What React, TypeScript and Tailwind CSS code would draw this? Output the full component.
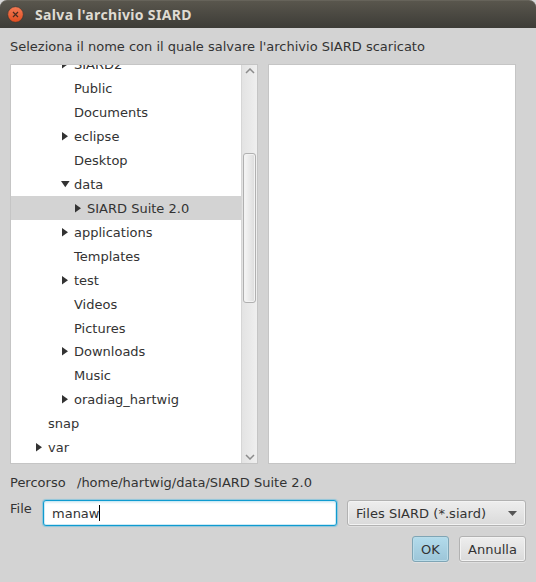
import React from "react";

type Row = {
  label: string;
  indent: string;
  state?: "open" | "closed";
  selected?: boolean;
  height?: string;
};

const rows: Row[] = [
  { label: "SIARD2", indent: "pl-[50px]", state: "closed" },
  { label: "Public", indent: "pl-[50px]" },
  { label: "Documents", indent: "pl-[50px]" },
  { label: "eclipse", indent: "pl-[50px]", state: "closed" },
  { label: "Desktop", indent: "pl-[50px]" },
  { label: "data", indent: "pl-[50px]", state: "open" },
  { label: "SIARD Suite 2.0", indent: "pl-[63px]", state: "closed", selected: true },
  { label: "applications", indent: "pl-[50px]", state: "closed" },
  { label: "Templates", indent: "pl-[50px]" },
  { label: "test", indent: "pl-[50px]", state: "closed" },
  { label: "Videos", indent: "pl-[50px]" },
  { label: "Pictures", indent: "pl-[50px]", height: "h-[23px]" },
  { label: "Downloads", indent: "pl-[50px]", state: "closed" },
  { label: "Music", indent: "pl-[50px]" },
  { label: "oradiag_hartwig", indent: "pl-[50px]", state: "closed" },
  { label: "snap", indent: "pl-[24px]" },
  { label: "var", indent: "pl-[24px]", state: "closed" },
];

function Disclosure({ state }: { state?: "open" | "closed" }) {
  return (
    <svg width="13" height="10" viewBox="0 0 13 10" className="mt-[7px] shrink-0" fill="#333333">
      {state === "closed" && <path d="M1 1L7 5.2L1 9.4Z" />}
      {state === "open" && <path d="M0 2H8.6L4.3 8.2Z" />}
    </svg>
  );
}

function TreeRow({ row }: { row: Row }) {
  return (
    <div
      className={`flex shrink-0 items-start ${row.height ?? "h-6"} ${row.indent} ${row.selected ? "bg-[#d3d3d3]" : ""}`}
    >
      <Disclosure state={row.state} />
      <span className="pt-px leading-6">{row.label}</span>
    </div>
  );
}

function ScrollBar() {
  return (
    <div className="flex w-4 shrink-0 flex-col items-center border-l border-[#d6d6d6] bg-linear-to-r from-[#e3e3e3] to-[#efefef]">
      <svg width="10" height="6" viewBox="0 0 10 6" className="mt-[3px] shrink-0" fill="none" stroke="#8c8c8c" strokeWidth="1.5">
        <path d="M1 5L5 1L9 5" />
      </svg>
      <div className="mt-[79px] h-[150px] w-[13px] shrink-0 rounded-[3px] border border-[#b0b0b0] bg-linear-to-r from-[#f6f6f6] to-[#dcdcdc] shadow-[inset_0_0_0_1px_#f2f2f2]" />
      <svg width="10" height="6" viewBox="0 0 10 6" className="mt-auto mb-[3px] shrink-0" fill="none" stroke="#8c8c8c" strokeWidth="1.5">
        <path d="M1 1L5 5L9 1" />
      </svg>
    </div>
  );
}

export default function App() {
  return (
    <div className="flex h-[582px] w-[536px] flex-col overflow-hidden bg-[#d3d3d3] font-['DejaVu_Sans',sans-serif] text-[13px] text-[#333333]">
      <div className="h-7 shrink-0 bg-[#d8d8d8]">
        <header className="flex h-7 items-center rounded-t-[7px] border-t border-[#66635a] bg-linear-to-b from-[#59564d] to-[#3d3c37] pl-[7px]">
          <svg width="17" height="17" viewBox="0 0 17 17" className="shrink-0">
            <defs>
              <linearGradient id="close" x1="0" y1="0" x2="0" y2="1">
                <stop offset="0" stopColor="#f47b55" />
                <stop offset="1" stopColor="#df4d20" />
              </linearGradient>
            </defs>
            <circle cx="8.5" cy="8.5" r="7.8" fill="url(#close)" stroke="#35332e" strokeWidth=".6" />
            <path d="M6 6L11 11M11 6L6 11" stroke="#4a2c20" strokeWidth="1.2" />
          </svg>
          <h1 className="ml-[11px] font-['Noto_Sans',sans-serif] text-[14px] font-bold leading-5 tracking-[0.34px] text-[#dfdbd2]">
            Salva l'archivio SIARD
          </h1>
        </header>
      </div>
      <main className="flex flex-1 flex-col px-[10px] pt-[9px]">
        <p className="h-[27px] leading-5">Seleziona il nome con il quale salvare l'archivio SIARD scaricato</p>
        <div className="flex h-[400px] gap-[10px]">
          <div className="flex w-[248px] overflow-hidden border border-[#c5c5c5] bg-white">
            <div className="-mt-[13px] flex flex-1 flex-col">
              {rows.map((row) => (
                <TreeRow key={row.label} row={row} />
              ))}
            </div>
            <ScrollBar />
          </div>
          <div className="w-[248px] border border-[#c5c5c5] bg-white" />
        </div>
        <div className="mt-[9px] flex h-5 leading-5">
          <span className="w-[67px]">Percorso</span>
          <span>/home/hartwig/data/SIARD Suite 2.0</span>
        </div>
        <div className="mt-[7px] flex h-[26px]">
          <span className="w-[33px] leading-[17px]">File</span>
          <div className="flex w-[294px] items-center rounded-[3px] border border-[#0f9bd0] bg-white pl-2 shadow-[0_0_1px_1px_#8fc5da,inset_0_0_0_1px_#cdeaf5,inset_0_2px_2px_#e0eff5]">
            <span className="pt-[2px]">manaw</span>
            <span className="h-4 w-px bg-black" />
          </div>
          <div className="ml-[10px] flex w-[179px] items-center justify-between rounded-[3px] border border-[#b2b2b2] bg-linear-to-b from-[#eeeeee] to-[#dadada] pl-2 pr-2 shadow-[inset_0_0_0_1px_#f3f3f3,0_1px_0_#e0e0e0]">
            <span className="pt-[2px] tracking-[0.04px]">Files SIARD (*.siard)</span>
            <svg width="9" height="5" viewBox="0 0 9 5" fill="#555555">
              <path d="M0 0H9L4.5 5Z" />
            </svg>
          </div>
        </div>
        <div className="mt-[10px] flex h-[26px] justify-end gap-[10px]">
          <button className="w-[37px] rounded-[3px] border border-[#7fa5b5] bg-linear-to-b from-[#b3dcec] to-[#9cc5d8] pt-[2px] shadow-[inset_0_0_0_1px_#b9dce9,0_1px_0_#e0e0e0]">
            OK
          </button>
          <button className="w-[67px] rounded-[3px] border border-[#b2b2b2] bg-linear-to-b from-[#eeeeee] to-[#dadada] pt-[2px] shadow-[inset_0_0_0_1px_#f3f3f3,0_1px_0_#e0e0e0]">
            Annulla
          </button>
        </div>
      </main>
    </div>
  );
}
